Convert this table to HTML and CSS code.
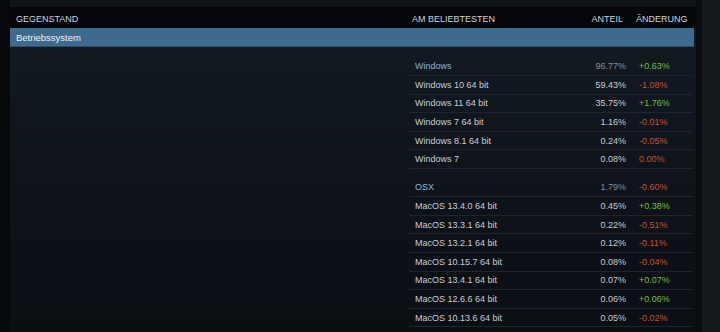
FILE: index.html
```html
<!DOCTYPE html>
<html lang="de">
<head>
<meta charset="utf-8">
<title>Betriebssystem</title>
<link rel="stylesheet" href="styles.css">
</head>
<body>
<div class="screen">
  <div class="edge-left"></div>
  <div class="panel">
    <div class="topgap"></div>
    <div class="head">
      <div class="h-item">GEGENSTAND</div>
      <div class="h-cols">
        <span class="h-name">AM BELIEBTESTEN</span>
        <span class="h-pct">ANTEIL</span>
        <span class="h-chg">ÄNDERUNG</span>
      </div>
    </div>
    <div class="category">Betriebssystem</div>
    <div class="body">
      <div class="left"></div>
      <div class="table">
        <div class="group">
          <div class="row top"><span class="name">Windows</span><span class="pct">96.77%</span><span class="chg up">+0.63%</span></div>
          <div class="row"><span class="name">Windows 10 64 bit</span><span class="pct">59.43%</span><span class="chg down">-1.08%</span></div>
          <div class="row"><span class="name">Windows 11 64 bit</span><span class="pct">35.75%</span><span class="chg up">+1.76%</span></div>
          <div class="row"><span class="name">Windows 7 64 bit</span><span class="pct">1.16%</span><span class="chg down">-0.01%</span></div>
          <div class="row"><span class="name">Windows 8.1 64 bit</span><span class="pct">0.24%</span><span class="chg down">-0.05%</span></div>
          <div class="row"><span class="name">Windows 7</span><span class="pct">0.08%</span><span class="chg down">0.00%</span></div>
        </div>
        <div class="group">
          <div class="row top"><span class="name">OSX</span><span class="pct">1.79%</span><span class="chg down">-0.60%</span></div>
          <div class="row"><span class="name">MacOS 13.4.0 64 bit</span><span class="pct">0.45%</span><span class="chg up">+0.38%</span></div>
          <div class="row"><span class="name">MacOS 13.3.1 64 bit</span><span class="pct">0.22%</span><span class="chg down">-0.51%</span></div>
          <div class="row"><span class="name">MacOS 13.2.1 64 bit</span><span class="pct">0.12%</span><span class="chg down">-0.11%</span></div>
          <div class="row"><span class="name">MacOS 10.15.7 64 bit</span><span class="pct">0.08%</span><span class="chg down">-0.04%</span></div>
          <div class="row"><span class="name">MacOS 13.4.1 64 bit</span><span class="pct">0.07%</span><span class="chg up">+0.07%</span></div>
          <div class="row"><span class="name">MacOS 12.6.6 64 bit</span><span class="pct">0.06%</span><span class="chg up">+0.06%</span></div>
          <div class="row"><span class="name">MacOS 10.13.6 64 bit</span><span class="pct">0.05%</span><span class="chg down">-0.02%</span></div>
        </div>
      </div>
    </div>
  </div>
  <div class="edge-right"></div>
</div>
</body>
</html>
```
FILE: styles.css
```css
* { box-sizing: border-box; }
html, body {
  margin: 0;
  height: 100%;
  background: #15181d;
  font-family: "Liberation Sans", Arial, sans-serif;
  font-size: 9px;
  color: #c6cdd4;
  overflow: hidden;
}
.screen {
  display: flex;
  height: 332px;
}
.edge-left {
  width: 10px;
  background: #07080b;
}
.edge-right {
  width: 6px;
  background: #0b0d11;
}
.panel {
  width: 686px;
  display: flex;
  flex-direction: column;
  background: linear-gradient(180deg, #141b23 0%, #0f141b 50%, #0b0e13 100%);
}
.topgap {
  height: 7px;
  background: #101318;
}
.head {
  height: 21px;
  background: #050609;
  display: flex;
  align-items: center;
  padding-top: 2px;
  color: #cdd4db;
  font-size: 9px;
}
.h-item {
  width: 402px;
  padding-left: 6px;
}
.h-cols {
  width: 281px;
  display: grid;
  grid-template-columns: 1fr auto 57px;
  column-gap: 13px;
}
.h-pct { text-align: right; }
.category {
  height: 19px;
  margin-right: 2px;
  background: #3e6a8b;
  border-bottom: 1px solid #2c4d66;
  color: #eef3f7;
  padding-left: 6px;
  display: flex;
  align-items: center;
  font-size: 9.5px;
}
.body {
  flex: 1;
  display: flex;
}
.left {
  width: 399px;
}
.table {
  width: 284px;
  padding-top: 10.5px;
}
.group + .group {
  margin-top: 9.5px;
}
.row {
  height: 18.6px;
  display: grid;
  grid-template-columns: 1fr auto 54px;
  column-gap: 13px;
  align-items: center;
  padding-left: 6px;
  border-bottom: 1px solid #1e252e;
  color: #c6cdd4;
}
.pct { text-align: right; color: #c6cbd1; }
.row.top .name { color: #8cb4d4; }
.row.top .pct { color: #858e97; }
.up { color: #6fbf3c; }
.down { color: #c5502d; }
```
